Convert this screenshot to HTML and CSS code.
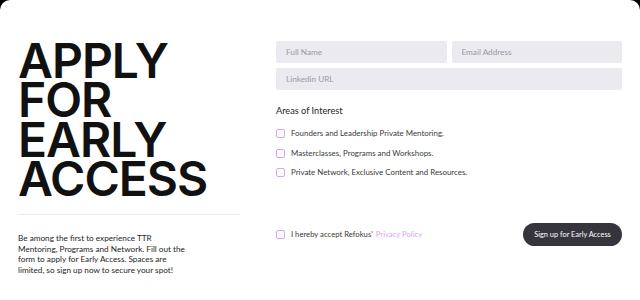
FILE: index.html
```html
<!DOCTYPE html>
<html lang="en">
<head>
    <meta charset="UTF-8">
    <meta name="viewport" content="width=device-width, initial-scale=1.0">
    <title>Apply for Early Access</title>
    <link rel="stylesheet" href="styles.css">
</head>
<body>
    <div class="card">
        <div class="intro">
            <h1 class="title">APPLY<br>FOR<br>EARLY<br>ACCESS</h1>
            <hr class="divider">
            <p class="lead">Be among the first to experience TTR Mentoring, Programs and Network. Fill out the form to apply for Early Access. Spaces are limited, so sign up now to secure your spot!</p>
        </div>

        <form class="form">
            <div class="fields">
                <input class="field" type="text" placeholder="Full Name">
                <input class="field" type="email" placeholder="Email Address">
                <input class="field wide" type="text" placeholder="Linkedin URL">
            </div>

            <h2 class="areas-title">Areas of Interest</h2>
            <ul class="areas">
                <li><label class="check"><span class="box"></span>Founders and Leadership Private Mentoring.</label></li>
                <li><label class="check"><span class="box"></span>Masterclasses, Programs and Workshops.</label></li>
                <li><label class="check"><span class="box"></span>Private Network, Exclusive Content and Resources.</label></li>
            </ul>

            <div class="submit-row">
                <label class="check"><span class="box"></span>I hereby accept Refokus' <a href="#" class="policy">Privacy Policy</a></label>
                <button type="button" class="signup">Sign up for Early Access</button>
            </div>
        </form>
    </div>
</body>
</html>
```

FILE: styles.css
```css
* {
    box-sizing: border-box;
}

html, body {
    margin: 0;
    height: 100%;
    background: #000;
}

body {
    font-family: Lato, "Liberation Sans", sans-serif;
    color: #1a1a1a;
}

.card {
    height: 100%;
    background: #fff;
    border-radius: 10px 10px 0 0;
    display: flex;
    gap: 36px;
    padding: 41px 18px 0 18px;
}

/* left side */
.intro {
    width: 222px;
    flex-shrink: 0;
}

.title {
    margin: 0;
    font-family: Inter, "Liberation Sans", sans-serif;
    font-size: 48px;
    line-height: 39.3px;
    font-weight: 600;
    letter-spacing: -1px;
    color: #111;
}

.divider {
    border: none;
    border-top: 1px solid #ededed;
    margin: 16px 0 18px 0;
}

.lead {
    margin: 0;
    width: 172px;
    font-size: 8.2px;
    line-height: 10.5px;
    color: #1e1e1e;
}

/* right side */
.form {
    flex: 1;
    display: flex;
    flex-direction: column;
}

.fields {
    display: grid;
    grid-template-columns: 1fr 1fr;
    gap: 5px;
}

.field {
    height: 22px;
    border: none;
    border-radius: 2px;
    background: #ebeaf1;
    padding: 0 10px;
    font-family: inherit;
    font-size: 8.2px;
    color: #333;
    outline: none;
}

.field::placeholder {
    color: #9a99a3;
}

.field.wide {
    grid-column: 1 / 3;
}

.areas-title {
    margin: 15px 0 0 0;
    font-size: 9.2px;
    font-weight: 400;
    color: #1e1e1e;
}

.areas {
    list-style-type: none;
    margin: 12px 0 0 0;
    padding: 0;
    display: flex;
    flex-direction: column;
    gap: 8.5px;
}

.check {
    display: flex;
    align-items: center;
    font-size: 7.9px;
    color: #3a3a3a;
    line-height: 11px;
}

.box {
    width: 9px;
    height: 9px;
    border: 1px solid #d8a6e6;
    border-radius: 2px;
    margin-right: 6px;
    flex-shrink: 0;
}

.policy {
    color: #dba6f2;
    text-decoration: none;
    margin-left: 3px;
}

.submit-row {
    display: flex;
    justify-content: space-between;
    align-items: center;
    margin-top: 45px;
}

.submit-row .check {
    font-size: 7.7px;
}

.signup {
    width: 99px;
    height: 23px;
    border: none;
    border-radius: 12px;
    background: #36353d;
    color: #fff;
    font-family: inherit;
    font-size: 7.4px;
    padding: 0;
}
```
